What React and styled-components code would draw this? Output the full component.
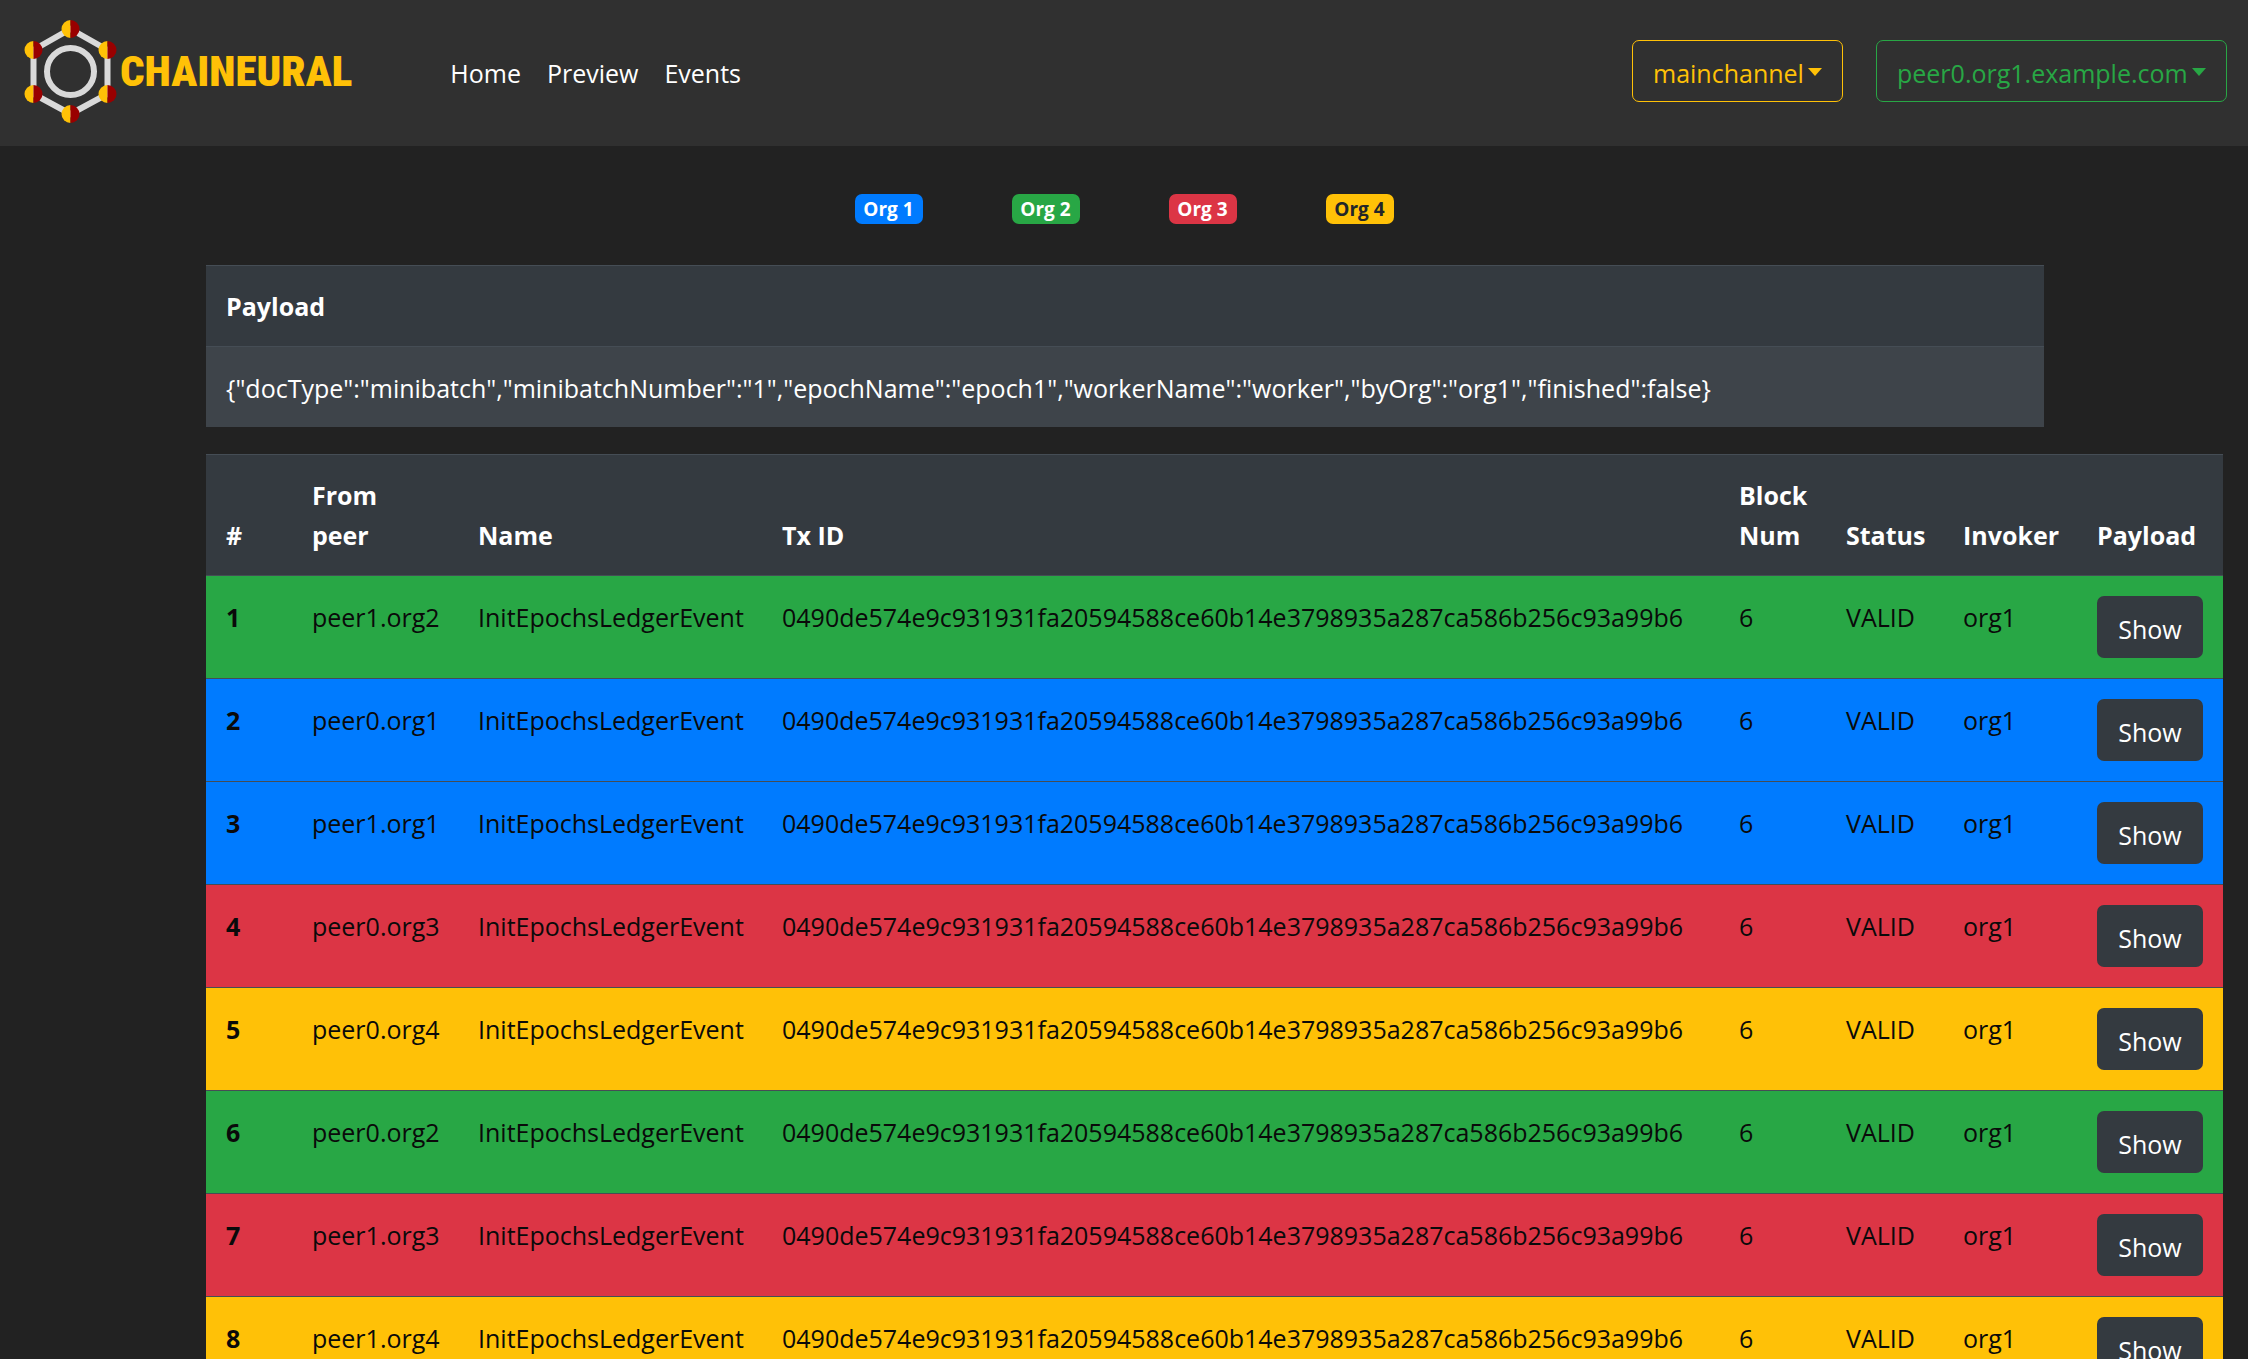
import React, { useState } from "react";
import styled, { createGlobalStyle } from "styled-components";

const GlobalStyle = createGlobalStyle`
  *, *::before, *::after { box-sizing: border-box; }
  body {
    margin: 0;
    overflow-x: hidden;
    background: #222222;
    color: #ffffff;
    font-family: "Segoe UI", "Open Sans", "Noto Sans", sans-serif;
    font-size: 25px;
    line-height: 40px;
  }
`;

const Header = styled.header`
  display: flex;
  align-items: center;
  min-height: 146px;
  padding: 14px 21px 18px;
  background: #303030;
`;

const Brand = styled.a`
  display: flex;
  align-items: center;
  gap: 2px;
  color: #ffc107;
  text-decoration: none;
`;

const Mark = styled.svg`
  width: 97px;
  height: 108px;
`;

const BrandName = styled.span`
  font-family: "Roboto Condensed", Roboto, sans-serif;
  font-size: 43px;
  font-weight: 900;
`;

const Nav = styled.nav`
  display: flex;
  gap: 26px;
  margin-left: 98px;
  padding-top: 4px;
`;

const NavLink = styled.a`
  color: #ffffff;
  text-decoration: none;
`;

const Pickers = styled.div`
  display: flex;
  gap: 33px;
  margin-left: auto;
`;

const Picker = styled.label`
  position: relative;
  display: flex;
  color: ${(p) => p.$tone};

  &::after {
    content: "";
    position: absolute;
    right: 21px;
    top: 28px;
    border: solid transparent;
    border-width: 8px 7px 0;
    border-top-color: currentColor;
    pointer-events: none;
  }
`;

const Select = styled.select`
  appearance: none;
  height: 62px;
  padding: 4px 38px 0 20px;
  border: 1px solid currentColor;
  border-radius: 7px;
  background: transparent;
  color: inherit;
  font: inherit;
`;

const Legend = styled.ul`
  display: flex;
  justify-content: center;
  gap: 89px;
  margin: 0;
  padding: 48px 0 41px;
  list-style: none;
`;

const Badge = styled.li`
  width: 68px;
  border-radius: 7px;
  background: ${(p) => p.$bg};
  color: ${(p) => p.$fg};
  font-size: 19px;
  font-weight: 700;
  line-height: 30px;
  text-align: center;
`;

const PayloadSection = styled.section`
  padding: 0 204px 27px 206px;
`;

const EventsSection = styled.section`
  padding: 0 25px 0 206px;
`;

const Table = styled.table`
  width: 100%;
  table-layout: fixed;
  border-spacing: 0;
  background: #343a40;
`;

const Col = styled.col`
  width: ${(p) => p.$width};
`;

const HeadCell = styled.th`
  padding: 20px;
  border-top: 1px solid #454d55;
  text-align: left;
  vertical-align: bottom;
  font-weight: 700;
`;

const Cell = styled.td`
  padding: 21px 20px 19px;
  border-top: 1px solid #454d55;
  vertical-align: top;
  text-align: left;
  white-space: nowrap;
`;

const PayloadCell = styled(Cell)`
  background: #3e444a;
  white-space: normal;
`;

const ActionCell = styled(Cell)`
  padding: 20px;
`;

const EventRow = styled.tr`
  background: ${(p) => p.$bg};
  color: #0a0a0a;
`;

const ShowButton = styled.button`
  display: block;
  width: 106px;
  height: 62px;
  padding: 3px 0 0;
  border: 0;
  border-radius: 7px;
  background: #343a40;
  color: #ffffff;
  font: inherit;
`;

const COLORS = {
  org1: "#007bff",
  org2: "#28a745",
  org3: "#dc3545",
  org4: "#ffc107",
};

const NODES = [
  [49.5, 12],
  [86.5, 33],
  [86.5, 77],
  [49.5, 97],
  [12.5, 77],
  [12.5, 33],
];

const BADGES = [
  ["Org 1", COLORS.org1, "#ffffff"],
  ["Org 2", COLORS.org2, "#ffffff"],
  ["Org 3", COLORS.org3, "#ffffff"],
  ["Org 4", COLORS.org4, "#212529"],
];

const COLUMNS = [
  ["#", "86px"],
  ["From peer", "166px"],
  ["Name", "304px"],
  ["Tx ID", "auto"],
  ["Block Num", "107px"],
  ["Status", "117px"],
  ["Invoker", "134px"],
  ["Payload", "146px"],
];

const TX = "0490de574e9c931931fa20594588ce60b14e3798935a287ca586b256c93a99b6";

const PEERS = [
  "peer1.org2",
  "peer0.org1",
  "peer1.org1",
  "peer0.org3",
  "peer0.org4",
  "peer0.org2",
  "peer1.org3",
  "peer1.org4",
];

const PAYLOAD = JSON.stringify({
  docType: "minibatch",
  minibatchNumber: "1",
  epochName: "epoch1",
  workerName: "worker",
  byOrg: "org1",
  finished: false,
});

function Logo() {
  return (
    <Mark viewBox="0 0 97 108" aria-hidden="true">
      <polygon
        points={NODES.map((n) => n.join(",")).join(" ")}
        fill="none"
        stroke="#d9d9d9"
        strokeWidth="6"
      />
      <circle cx="49.5" cy="54.5" r="23.5" fill="none" stroke="#d9d9d9" strokeWidth="6" />
      {NODES.map(([x, y]) => (
        <g key={`${x}-${y}`} transform={`translate(${x} ${y})`}>
          <path d="M0-9A9 9 0 0 0 0 9Z" fill="#ffc107" />
          <path d="M0-9A9 9 0 0 1 0 9Z" fill="#990000" />
        </g>
      ))}
    </Mark>
  );
}

export default function App() {
  const [payload, setPayload] = useState(PAYLOAD);
  return (
    <>
      <GlobalStyle />
      <Header>
        <Brand href="#">
          <Logo />
          <BrandName>CHAINEURAL</BrandName>
        </Brand>
        <Nav>
          <NavLink href="#home">Home</NavLink>
          <NavLink href="#preview">Preview</NavLink>
          <NavLink href="#events">Events</NavLink>
        </Nav>
        <Pickers>
          <Picker $tone="#ffc107">
            <Select aria-label="Channel">
              <option>mainchannel</option>
            </Select>
          </Picker>
          <Picker $tone="#28a745">
            <Select aria-label="Peer">
              <option>peer0.org1.example.com</option>
            </Select>
          </Picker>
        </Pickers>
      </Header>
      <main>
        <Legend>
          {BADGES.map(([label, bg, fg]) => (
            <Badge key={label} $bg={bg} $fg={fg}>{label}</Badge>
          ))}
        </Legend>
        <PayloadSection>
          <Table>
            <thead>
              <tr><HeadCell scope="col">Payload</HeadCell></tr>
            </thead>
            <tbody>
              <tr><PayloadCell>{payload}</PayloadCell></tr>
            </tbody>
          </Table>
        </PayloadSection>
        <EventsSection>
          <Table>
            <colgroup>
              {COLUMNS.map(([name, width]) => <Col key={name} $width={width} />)}
            </colgroup>
            <thead>
              <tr>
                {COLUMNS.map(([name]) => <HeadCell key={name} scope="col">{name}</HeadCell>)}
              </tr>
            </thead>
            <tbody>
              {PEERS.map((peer, i) => (
                <EventRow key={peer} $bg={COLORS[peer.split(".")[1]]}>
                  <Cell as="th" scope="row">{i + 1}</Cell>
                  <Cell>{peer}</Cell>
                  <Cell>InitEpochsLedgerEvent</Cell>
                  <Cell>{TX}</Cell>
                  <Cell>6</Cell>
                  <Cell>VALID</Cell>
                  <Cell>org1</Cell>
                  <ActionCell>
                    <ShowButton type="button" onClick={() => setPayload(PAYLOAD)}>Show</ShowButton>
                  </ActionCell>
                </EventRow>
              ))}
            </tbody>
          </Table>
        </EventsSection>
      </main>
    </>
  );
}
